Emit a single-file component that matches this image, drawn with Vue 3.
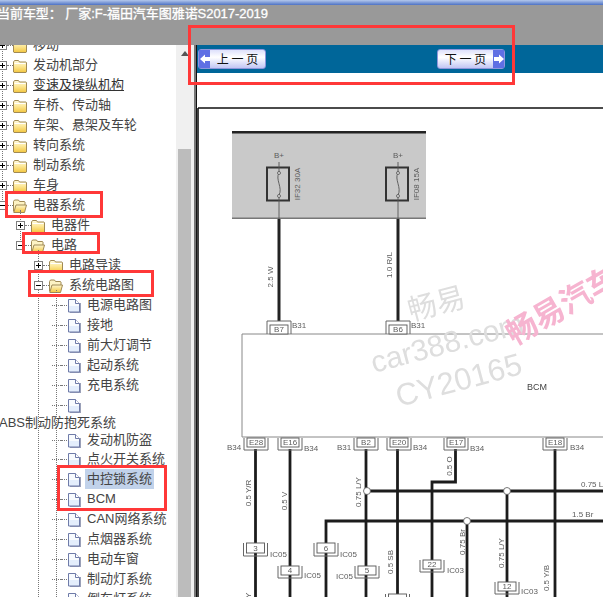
<template>
	<div class="page">
		<div class="title-strip"></div>
		<header class="top-bar">当前车型： 厂家:F-福田汽车图雅诺S2017-2019</header>

		<div class="content">
			<aside class="tree">
				<span class="guide guide-0"></span>
				<span class="guide guide-1"></span>
				<span class="guide guide-2"></span>
				<span class="guide guide-3"></span>
				<div
					v-for="(node, i) in nodes"
					:key="i"
					class="row"
					:class="[node.plain ? 'plain' : 'd' + node.depth, node.cls]">
					<template v-if="!node.plain">
						<span class="toggle" :class="node.toggle"></span>
						<span class="dots"></span>
						<svg v-if="node.icon === 'closed'" class="icon" viewBox="0 0 14 14">
							<defs>
								<linearGradient id="fold" x1="0" y1="0" x2="0" y2="1">
									<stop offset="0" stop-color="#fffbe0" />
									<stop offset=".45" stop-color="#fde99a" />
									<stop offset="1" stop-color="#f3c63e" />
								</linearGradient>
							</defs>
							<path d="M.5 3 1.500 1.500h4l1 1.500h6.500l.5.5v9.500l-.5.500H1l-.5-.5z" fill="url(#fold)" stroke="#a08a55" />
							<path d="M1.500 4.500h11" stroke="#fff" stroke-width="1" />
						</svg>
						<svg v-else-if="node.icon === 'open'" class="icon" viewBox="0 0 14 14">
							<defs>
								<linearGradient id="foldOpen" x1="0" y1="0" x2="0" y2="1">
									<stop offset="0" stop-color="#fff8d0" />
									<stop offset="1" stop-color="#f2c53c" />
								</linearGradient>
							</defs>
							<path d="M.5 12.500V2.500l1-1.500h4l1 1.500h5l.5.5V6" fill="#fdf3c4" stroke="#a08a55" />
							<path d="M.8 13.500 3 6h10.500l-2 7.500z" fill="url(#foldOpen)" stroke="#a08a55" />
						</svg>
						<svg v-else class="icon" viewBox="0 0 14 14">
							<path d="M13 14H3v-1h10V4h1v10z" fill="#9aa0b8" />
							<path d="M1.500.5h7l4 4v8.500h-11z" fill="#e4eefc" stroke="#6f7ba8" />
							<path d="M8.500.5v4h4" fill="#fff" stroke="#6f7ba8" />
							<path d="M2 1h6v4h4v2H2z" fill="#fff" opacity=".75" />
						</svg>
					</template>
					<span class="label">{{ node.text }}</span>
				</div>
			</aside>

			<div class="scrollbar">
				<span class="arrow-up"></span>
				<span class="thumb"></span>
			</div>
			<div class="splitter"></div>

			<main class="viewer">
				<nav class="pager">
					<button class="page-btn prev">
						<span class="arrow-cell">
							<svg viewBox="0 0 10 10" width="10" height="10"><path d="M0 5 5 .5V3h5v4H5v2.500z" fill="#fff" /></svg>
						</span>
						<span class="btn-text">上 一 页</span>
					</button>
					<button class="page-btn next">
						<span class="btn-text">下 一 页</span>
						<span class="arrow-cell">
							<svg viewBox="0 0 10 10" width="10" height="10"><path d="M10 5 5 .5V3H0v4h5v2.500z" fill="#fff" /></svg>
						</span>
					</button>
				</nav>

				<svg class="diagram" viewBox="197 73 406 524" width="406" height="524">
					<path d="M198 108H603M198 108V597" fill="none" stroke="#111" stroke-width="1.6" />

					<g class="soft">
						<!-- fuse box -->
						<rect x="232" y="131" width="194" height="88" fill="#c9c9c9" />
						<rect x="232" y="131" width="194" height="2.500" fill="#222" />
						<rect x="232" y="217.500" width="194" height="1.500" fill="#777" />
						<g v-for="fuse in fuses" :key="fuse.x">
							<rect :x="fuse.x - 12" y="167.500" width="22" height="33" fill="none" stroke="#333" stroke-width="2" />
							<path :d="`M${fuse.x} 162V173c-4 6 4 15 0 22V219`" fill="none" stroke="#555" stroke-width=".9" />
							<circle :cx="fuse.x" cy="173" r="1.500" fill="#ddd" stroke="#444" stroke-width=".7" />
							<circle :cx="fuse.x" cy="196" r="1.500" fill="#ddd" stroke="#444" stroke-width=".7" />
							<text :x="fuse.x" y="158" class="tiny" text-anchor="middle">B+</text>
							<text :transform="`rotate(-90 ${fuse.x + 21} 184)`" :x="fuse.x + 21" y="184" class="tiny" text-anchor="middle">{{ fuse.name }}</text>
							<path :d="`M${fuse.x} 219V321`" stroke="#222" stroke-width="3" />
						</g>

						<!-- BCM body -->
						<path d="M603 334H242V437H603" fill="none" stroke="#888" stroke-width="1" />
						<text x="527" y="390" class="tiny big">BCM</text>

						<!-- wires -->
						<path
							v-for="(d, i) in wires"
							:key="i"
							:d="d"
							fill="none"
							stroke="#1c1c1c"
							stroke-width="2.800" />
						<circle v-for="dot in joints" :key="dot[0]" :cx="dot[0]" :cy="dot[1]" r="3.500" fill="#fff" stroke="#555" stroke-width=".8" />

						<!-- connectors -->
						<g v-for="pin in pins" :key="pin.name + pin.x + pin.y">
							<rect :x="pin.x - pin.w" :y="pin.y" :width="pin.w * 2" :height="pin.h" fill="#fff" stroke="#555" stroke-width=".9" />
							<path :d="bracket(pin)" fill="none" stroke="#666" stroke-width="1" />
							<text :x="pin.x" :y="pin.y + pin.h - 2.500" class="tiny" text-anchor="middle">{{ pin.name }}</text>
						</g>

						<text v-for="t in labels" :key="t.s + t.x" :x="t.x" :y="t.y" class="tiny">{{ t.s }}</text>
						<text
							v-for="t in wireLabels"
							:key="t.s + t.x"
							:x="t.x"
							:y="t.y"
							:transform="`rotate(-90 ${t.x} ${t.y})`"
							class="tiny"
							text-anchor="middle">{{ t.s }}</text>
					</g>

					<!-- watermarks -->
					<text x="411" y="321" class="mark" transform="rotate(-15 411 321)">畅易</text>
					<text x="374" y="373" class="mark latin" transform="rotate(-15 374 373)">car388.com</text>
					<text x="399" y="407" class="mark latin big-mark" transform="rotate(-15 399 407)">CY20165</text>
					<text x="514" y="346" class="mark-pink" transform="rotate(-30 514 346)">畅易汽车</text>
				</svg>
			</main>
		</div>

		<span class="note note-top"></span>
		<span class="note note-system"></span>
		<span class="note note-circuit"></span>
		<span class="note note-diagram"></span>
		<span class="note note-lock"></span>
	</div>
</template>

<script setup>
	const folder = (text, depth, toggle = "plus", icon = "closed", cls = "") => ({ text, depth, toggle, icon, cls });
	const leaf = (text, cls = "") => ({ text, depth: 3, toggle: "none", icon: "doc", cls });

	const nodes = [
		folder("移动", 0),
		folder("发动机部分", 0),
		folder("变速及操纵机构", 0, "plus", "closed", "linked"),
		folder("车桥、传动轴", 0),
		folder("车架、悬架及车轮", 0),
		folder("转向系统", 0),
		folder("制动系统", 0),
		folder("车身", 0),
		folder("电器系统", 0, "minus", "open"),
		folder("电器件", 1),
		folder("电路", 1, "minus", "open"),
		folder("电路导读", 2),
		folder("系统电路图", 2, "minus", "open"),
		leaf("电源电路图"),
		leaf("接地"),
		leaf("前大灯调节"),
		leaf("起动系统"),
		leaf("充电系统"),
		leaf(""),
		{ text: "ABS制动防抱死系统", plain: true, cls: "short" },
		leaf("发动机防盗", "mid"),
		leaf("点火开关系统"),
		leaf("中控锁系统", "selected"),
		leaf("BCM"),
		leaf("CAN网络系统"),
		leaf("点烟器系统"),
		leaf("电动车窗"),
		leaf("制动灯系统"),
		leaf("倒车灯系统"),
	];

	const fuses = [
		{ x: 279, name: "IF32 30A" },
		{ x: 398, name: "IF08 15A" },
	];

	const wires = [
		"M255.500 449V597",
		"M290 449V597",
		"M366 449V597",
		"M397.500 449V597",
		"M455.500 449V482H432V597",
		"M555 449V597",
		"M367 491H603",
		"M507 491V597",
		"M326 597V521H603",
		"M467 521V597",
	];

	const joints = [
		[367, 491],
		[507, 491],
		[467, 521],
	];

	// side: 'top' has the bracket over the box, 'bottom' under it
	const pins = [
		{ name: "B7", x: 279, y: 325, w: 9, h: 9, side: "top" },
		{ name: "B6", x: 398, y: 325, w: 9, h: 9, side: "top" },
		{ name: "E28", x: 256, y: 438, w: 9, h: 9, side: "bottom" },
		{ name: "E16", x: 290, y: 438, w: 9, h: 9, side: "bottom" },
		{ name: "B2", x: 366, y: 438, w: 9, h: 9, side: "bottom" },
		{ name: "E20", x: 399, y: 438, w: 9, h: 9, side: "bottom" },
		{ name: "E17", x: 456, y: 438, w: 9, h: 9, side: "bottom" },
		{ name: "E18", x: 555, y: 438, w: 9, h: 9, side: "bottom" },
		{ name: "3", x: 255.5, y: 543, w: 9, h: 10, side: "bottom" },
		{ name: "6", x: 326, y: 543, w: 9, h: 10, side: "bottom" },
		{ name: "4", x: 290, y: 566, w: 9, h: 9, side: "bottom" },
		{ name: "5", x: 367, y: 566, w: 9, h: 9, side: "bottom" },
		{ name: "22", x: 432, y: 560, w: 9, h: 9, side: "bottom" },
		{ name: "12", x: 507, y: 582, w: 9, h: 9, side: "bottom" },
		{ name: "", x: 397.5, y: 594, w: 9, h: 9, side: "bottom" },
	];

	const bracket = (p) => {
		const l = p.x - p.w - 3;
		const r = p.x + p.w + 3;
		if (p.side === "top") {
			const t = p.y - 4;
			return `M${l} ${p.y + p.h}V${t}H${r}V${p.y + p.h}`;
		}
		const b = p.y + p.h + 3;
		return `M${l} ${p.y}V${b}H${r}V${p.y}`;
	};

	const labels = [
		{ s: "B31", x: 292, y: 328 },
		{ s: "B31", x: 411, y: 328 },
		{ s: "B34", x: 227, y: 450 },
		{ s: "B34", x: 304, y: 451 },
		{ s: "B31", x: 337, y: 450 },
		{ s: "B34", x: 413, y: 450 },
		{ s: "B34", x: 470, y: 451 },
		{ s: "B34", x: 570, y: 450 },
		{ s: "0.75 L", x: 581, y: 487 },
		{ s: "1.5 Br", x: 572, y: 517 },
		{ s: "IC05", x: 270, y: 557 },
		{ s: "IC05", x: 340, y: 557 },
		{ s: "IC05", x: 304, y: 578 },
		{ s: "IC05", x: 336, y: 579 },
		{ s: "IC03", x: 447, y: 573 },
		{ s: "IC03", x: 521, y: 594 },
	];

	const wireLabels = [
		{ s: "2.5 W", x: 273, y: 277 },
		{ s: "1.0 R/L", x: 392, y: 265 },
		{ s: "0.5 Y/R", x: 251, y: 493 },
		{ s: "0.5 V", x: 287, y: 501 },
		{ s: "0.75 L/Y", x: 361, y: 492 },
		{ s: "0.5 O", x: 452, y: 466 },
		{ s: "0.75 Br", x: 465, y: 542 },
		{ s: "0.75 L/Y", x: 504, y: 553 },
		{ s: "0.5 SB", x: 393, y: 562 },
		{ s: "0.5 Y/B", x: 549, y: 578 },
		{ s: "0.5 Y", x: 251, y: 602 },
	];
</script>

<style scoped>
	.page {
		position: relative;
		width: 603px;
		height: 597px;
		overflow: hidden;
		background: #fff;
		font-family: "Liberation Sans", "Noto Sans CJK SC", sans-serif;
	}
	.title-strip {
		height: 5px;
		background: linear-gradient(#b4c8ec, #4d72c4);
	}
	.top-bar {
		height: 40px;
		margin-left: -3px;
		padding-top: 1px;
		box-sizing: border-box;
		background: #999;
		color: #fff;
		font-size: 13px;
		line-height: 16px;
		white-space: pre;
		-webkit-text-stroke: 0.3px #fff;
		letter-spacing: -0.05px;
	}
	.content {
		display: flex;
		height: 552px;
	}

	/* tree */
	.tree {
		position: relative;
		width: 176px;
		flex: none;
		overflow: hidden;
		color: #444;
		font-size: 13px;
	}
	.row {
		display: flex;
		align-items: center;
		height: 20px;
		white-space: nowrap;
	}
	.row:first-of-type {
		margin-top: -10px;
	}
	.d0 {
		margin-left: -2px;
	}
	.d1 {
		margin-left: 16px;
	}
	.d2 {
		margin-left: 34px;
	}
	.d3 {
		margin-left: 52px;
	}
	.plain {
		margin-left: -1px;
	}
	.short {
		height: 16px;
	}
	.mid {
		height: 18px;
	}
	.toggle {
		position: relative;
		box-sizing: border-box;
		width: 9px;
		height: 9px;
		flex: none;
		border: 1px solid #808080;
		background: #fff;
	}
	.toggle.none {
		border: none;
		background: none;
		height: 0;
		border-bottom: 1px dotted #777;
	}
	.toggle.plus::before,
	.toggle.minus::before {
		content: "";
		position: absolute;
		left: 1px;
		top: 3px;
		width: 5px;
		height: 1px;
		background: #000;
	}
	.toggle.plus::after {
		content: "";
		position: absolute;
		left: 3px;
		top: 1px;
		width: 1px;
		height: 5px;
		background: #000;
	}
	.dots {
		width: 6px;
		flex: none;
		border-bottom: 1px dotted #777;
	}
	.icon {
		width: 14px;
		height: 14px;
		flex: none;
		margin-right: 6px;
		margin-top: 2px;
	}
	.label {
		line-height: 20px;
	}
	.plain .label {
		line-height: 16px;
	}
	.linked .label {
		color: #333;
		text-decoration: underline;
	}
	.selected .label {
		background: #c1d2ea;
		margin-left: -2px;
		padding: 0 2px;
	}
	.guide {
		position: absolute;
		border-left: 1px dotted #777;
		width: 0;
	}
	.guide-0 {
		left: 2px;
		top: 0;
		height: 161px;
	}
	.guide-1 {
		left: 20px;
		top: 165px;
		height: 36px;
	}
	.guide-2 {
		left: 38px;
		top: 205px;
		height: 347px;
	}
	.guide-3 {
		left: 56px;
		top: 245px;
		height: 307px;
	}

	/* scrollbar */
	.scrollbar {
		position: relative;
		width: 18px;
		flex: none;
		background: #f0f0f0;
	}
	.arrow-up {
		position: absolute;
		left: 5px;
		top: 6px;
		border-left: 4px solid transparent;
		border-right: 4px solid transparent;
		border-bottom: 5px solid #555;
	}
	.thumb {
		position: absolute;
		left: 2px;
		top: 104px;
		bottom: 0;
		width: 13px;
		background: #bcbcbc;
	}
	.splitter {
		width: 3px;
		flex: none;
		background: linear-gradient(to right, #777 0 2px, #111 2px);
	}

	/* viewer */
	.viewer {
		flex: 1;
		min-width: 0;
		overflow: hidden;
	}
	.pager {
		display: flex;
		align-items: center;
		gap: 171px;
		height: 28px;
		padding-left: 1px;
		background: #006699;
	}
	.page-btn {
		display: flex;
		align-items: center;
		box-sizing: border-box;
		width: 68px;
		height: 20px;
		padding: 0;
		border: 1px solid #8f96dc;
		border-radius: 3px;
		background: linear-gradient(#dde0fb, #fff 40%, #c2c6f4);
		color: #111;
		font-family: "Noto Sans CJK SC", sans-serif;
		font-size: 12px;
	}
	.arrow-cell {
		display: flex;
		align-items: center;
		justify-content: center;
		width: 11px;
		height: 18px;
		flex: none;
		background: #5f6fe4;
	}
	.btn-text {
		flex: 1;
		text-align: center;
		line-height: 18px;
		white-space: nowrap;
	}
	.diagram {
		display: block;
	}
	.soft {
		filter: blur(0.5px);
	}
	.tiny {
		font-family: "Liberation Sans", sans-serif;
		font-size: 8px;
		fill: #5c5c5c;
	}
	.big {
		font-size: 9px;
		fill: #444;
	}
	.mark {
		font-family: "Noto Sans CJK SC", sans-serif;
		font-size: 29px;
		fill: #dedede;
	}
	.mark.latin {
		font-family: "Liberation Sans", sans-serif;
		font-size: 30px;
	}
	.mark.big-mark {
		font-size: 31px;
	}
	.mark-pink {
		font-family: "Noto Sans CJK SC", sans-serif;
		font-size: 31px;
		font-weight: 700;
		fill: #f6b4d0;
	}

	/* red marks drawn on top of the screenshot */
	.note {
		position: absolute;
		box-sizing: border-box;
		border: 3px solid #ff3838;
	}
	.note-top {
		left: 188px;
		top: 25px;
		width: 327px;
		height: 60px;
	}
	.note-system {
		left: 5px;
		top: 191px;
		width: 98px;
		height: 27px;
	}
	.note-circuit {
		left: 22px;
		top: 232px;
		width: 78px;
		height: 22px;
	}
	.note-diagram {
		left: 28px;
		top: 270px;
		width: 126px;
		height: 27px;
	}
	.note-lock {
		left: 57px;
		top: 465px;
		width: 110px;
		height: 46px;
	}
</style>
